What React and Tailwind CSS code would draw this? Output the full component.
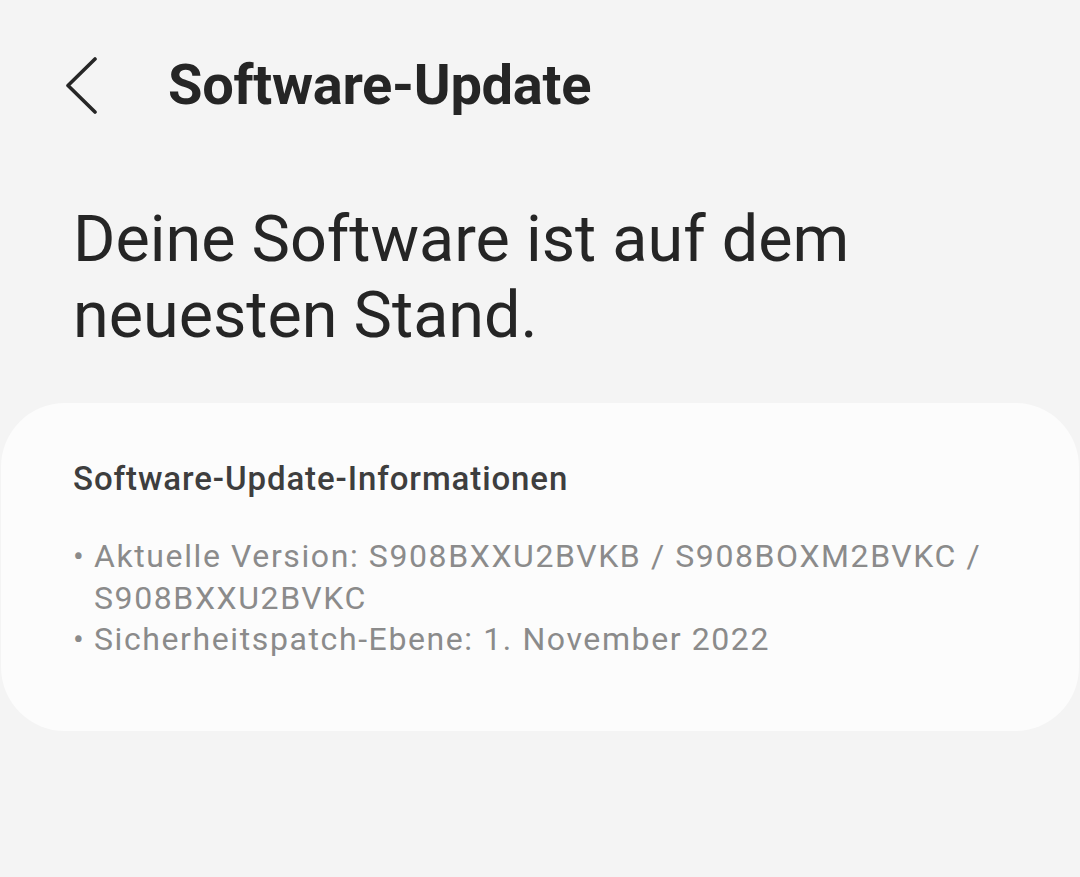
export default function App() {
  return (
    <div
      className="w-[1080px] h-[877px] bg-[#f4f4f4] overflow-hidden"
      style={{ fontFamily: "Roboto, 'Noto Sans', sans-serif" }}
    >
      {/* top bar */}
      <div className="flex items-center h-[64px] mt-[53px] pl-[64px]">
        <button className="w-[40px] h-[60px] flex items-center">
          <svg width="36" height="58" viewBox="0 0 36 58" fill="none">
            <polyline
              points="31,3 4,29.5 31,56"
              stroke="#262626"
              strokeWidth="3.6"
              strokeLinecap="round"
              strokeLinejoin="round"
            />
          </svg>
        </button>
        <h1 className="ml-[64px] text-[56px] leading-[64px] font-bold text-[#252525] tracking-[-0.3px]">
          Software-Update
        </h1>
      </div>

      {/* status */}
      <p className="mt-[84px] px-[73px] text-[64.7px] leading-[76px] text-[#252525]">
        Deine Software ist auf dem
        <br />
        neuesten Stand.
      </p>

      {/* info card */}
      <div className="mt-[50px] mx-[1px] rounded-[64px] bg-[#fcfcfc] pt-[56px] pb-[70px] px-[72px]">
        <h2 className="text-[33px] leading-[40px] font-medium text-[#3e3e3e] tracking-[0.9px]">
          Software-Update-Informationen
        </h2>
        <ul className="mt-[37px] text-[32px] leading-[41.5px] text-[#8b8b8b] tracking-[1.6px]">
          <li className="flex">
            <span className="w-[21px] shrink-0">•</span>
            <span>
              Aktuelle Version: S908BXXU2BVKB / S908BOXM2BVKC /
              <br />
              S908BXXU2BVKC
            </span>
          </li>
          <li className="flex">
            <span className="w-[21px] shrink-0">•</span>
            <span>Sicherheitspatch-Ebene: 1. November 2022</span>
          </li>
        </ul>
      </div>
    </div>
  );
}
